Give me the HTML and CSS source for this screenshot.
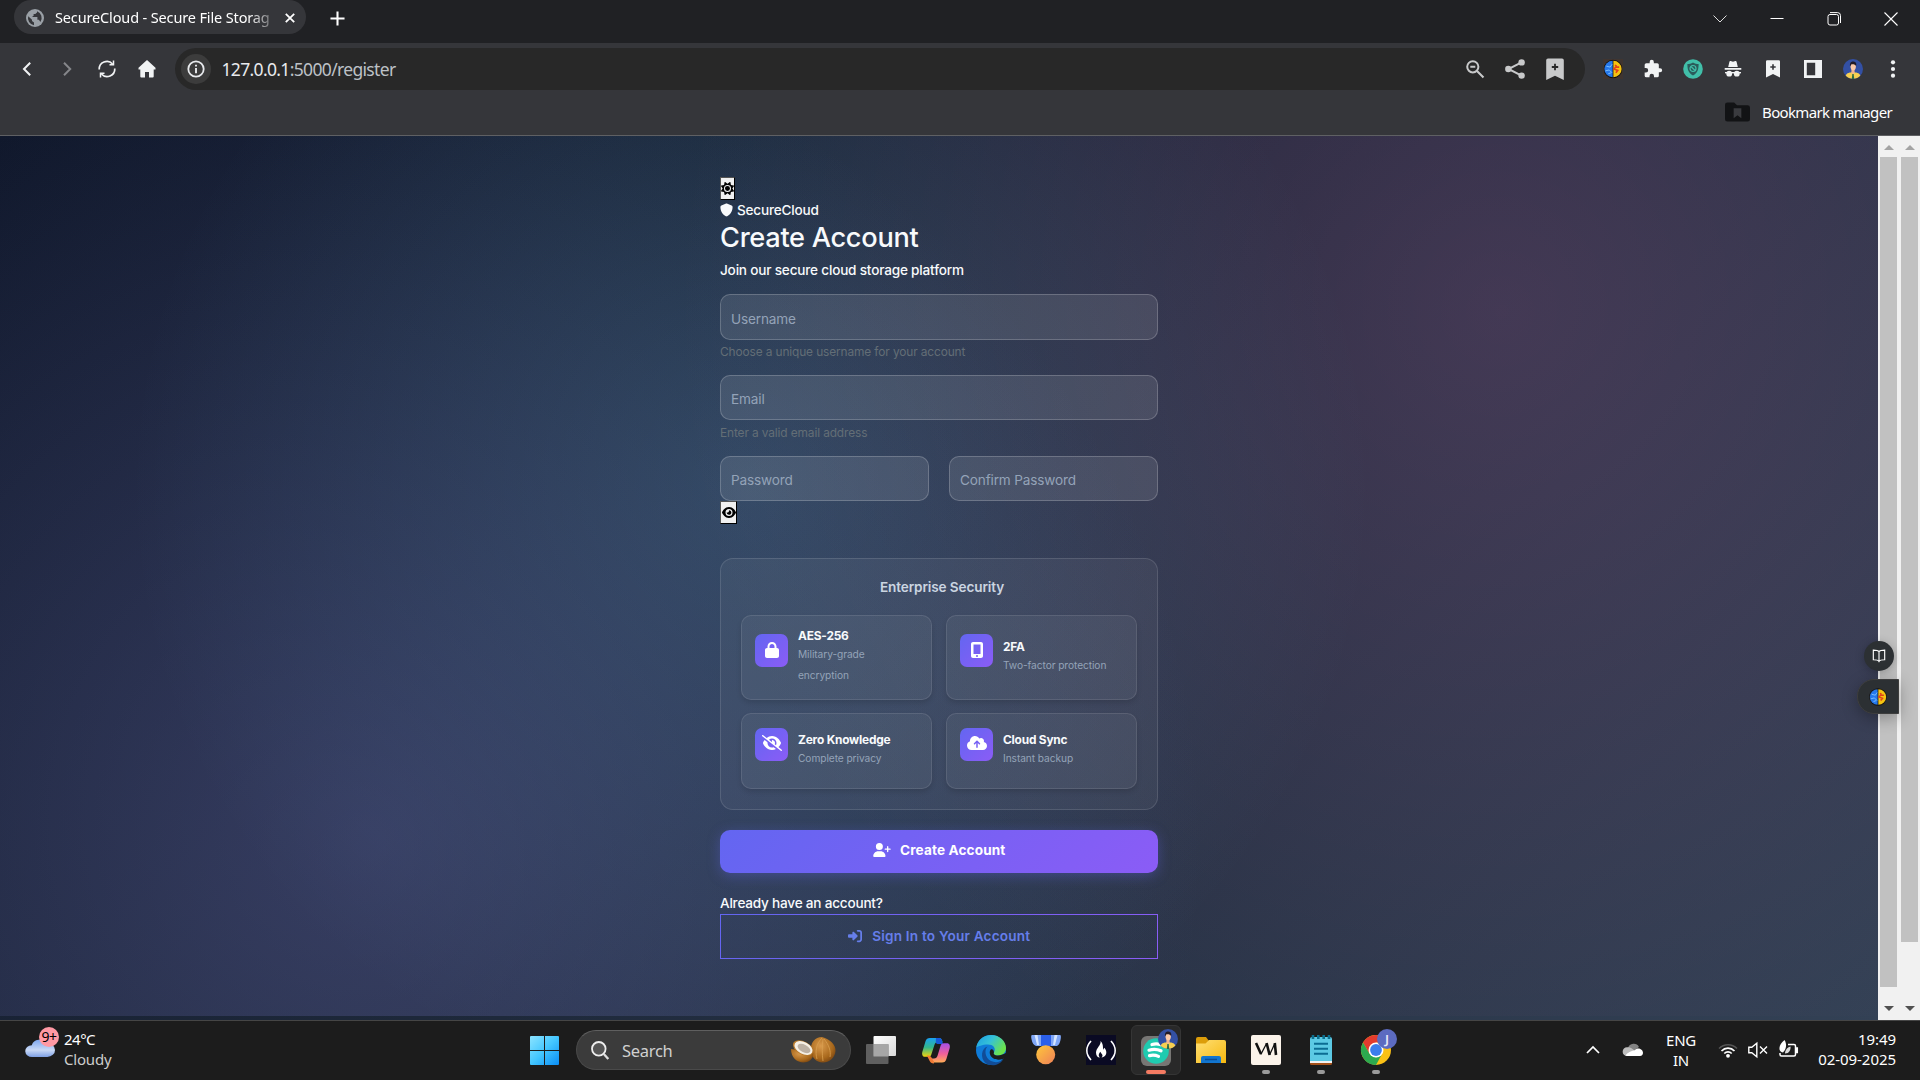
FILE: index.html
```html
<!DOCTYPE html>
<html lang="en">
<head>
<meta charset="utf-8">
<title>SecureCloud - Secure File Storage</title>
<link rel="stylesheet" href="styles.css">
</head>
<body>
<svg class="defs" width="0" height="0" aria-hidden="true">
  <defs>
    <linearGradient id="gWin" x1="0" y1="0" x2="1" y2="1"><stop offset="0" stop-color="#8ce4ff"/><stop offset=".5" stop-color="#43c6ff"/><stop offset="1" stop-color="#0a8df5"/></linearGradient>
    <linearGradient id="gCloud" x1="0" y1="0" x2="0" y2="1"><stop offset="0" stop-color="#7da6ee"/><stop offset=".6" stop-color="#c9d9f6"/><stop offset="1" stop-color="#7ea0e4"/></linearGradient>
    <linearGradient id="gEdgeA" x1="0" y1="0" x2="1" y2=".5"><stop offset="0" stop-color="#1b9de2"/><stop offset=".5" stop-color="#35c1d8"/><stop offset="1" stop-color="#6be34c"/></linearGradient>
    <linearGradient id="gFolder" x1="0" y1="0" x2="1" y2="1"><stop offset="0" stop-color="#ffdf74"/><stop offset="1" stop-color="#f6b80f"/></linearGradient>
    <linearGradient id="gCopA" x1="0" y1="0" x2="0" y2="1"><stop offset="0" stop-color="#1aa0f2"/><stop offset=".5" stop-color="#33b78c"/><stop offset="1" stop-color="#f3d40b"/></linearGradient>
    <linearGradient id="gCopB" x1="0" y1="0" x2="0" y2="1"><stop offset="0" stop-color="#a44fe8"/><stop offset=".55" stop-color="#f0609a"/><stop offset="1" stop-color="#ffad55"/></linearGradient>
    <radialGradient id="gCoco" cx=".4" cy=".35" r=".7"><stop offset="0" stop-color="#d99a4c"/><stop offset=".7" stop-color="#a8681c"/><stop offset="1" stop-color="#7c4712"/></radialGradient>
    <linearGradient id="gTask" x1="0" y1="0" x2="1" y2="1"><stop offset="0" stop-color="#fff"/><stop offset="1" stop-color="#d9d9d9"/></linearGradient>
    <linearGradient id="gMedal" x1="0" y1="0" x2="1" y2="1"><stop offset="0" stop-color="#ffc83a"/><stop offset="1" stop-color="#ee8058"/></linearGradient>
    <symbol id="brain" viewBox="0 0 20 20">
      <circle cx="10" cy="10" r="9.8" fill="#14110f"/>
      <path d="M9.6 1.300A8.700 8.700 0 0 0 9.600 18.700Z" fill="#2678ea"/>
      <path d="M10.400 1.300a8.700 8.700 0 0 1 0 17.400Z" fill="#f5c311"/>
      <path d="M3 7l4 1 2-3M2 12l4-1 3 3M5 15l3-1" stroke="#7cc0ff" fill="none"/>
      <path d="M16.500 8l-3.500 0-2 2 4 1.500-2 2.500M12 6l2 1" stroke="#e0401c" stroke-width="1.700" fill="none"/>
    </symbol>
    <symbol id="avatar" viewBox="0 0 20 20">
      <circle cx="10" cy="10" r="10" fill="#3350a4"/>
      <path d="M2.600 16.600C3.600 13.900 7 13.300 10 13.300s6.400.6 7.400 3.300A10 10 0 0 1 2.600 16.600Z" fill="#f6cf50"/>
      <path d="M8.400 10h3.200v3.400L10 15.600l-1.600-2.200Z" fill="#f0b391"/>
      <ellipse cx="10.200" cy="7.600" rx="2.700" ry="3.600" fill="#fbc9a8"/>
      <path d="M7.100 7.600C6.300 3.500 8.500 2.300 10.500 2.400c2.600.1 3.300 2.200 2.600 4.800C12.500 5.600 10 5 8.200 5.500Z" fill="#231b26"/>
      <path d="M9.300 15h1.400l.5 5H8.800Z" fill="#2d6b46"/>
    </symbol>
  </defs>
</svg>
<div class="screen">
  <header class="tabstrip">
    <div class="tab">
      <svg class="tab-globe" viewBox="0 0 18 18"><circle cx="9" cy="9" r="9" fill="#9aa0a6"/><path d="M2.200 7.200 6 10.700v1.300l2 1.600v2.700A7.300 7.300 0 0 1 2.200 7.200ZM11 2.200v1.300L9.300 5H7.600v1.700L6 8h5.400v2.800h1.500l1.500 2.200A7.200 7.200 0 0 0 11 2.200Z" fill="#35363a"/></svg>
      <span class="tab-title">SecureCloud - Secure File Storag</span>
      <svg class="tab-close" viewBox="0 0 10 10"><path d="M.8.8l8.400 8.400M9.200.8.8 9.200" stroke="#fff" stroke-width="1.800"/></svg>
    </div>
    <svg class="newtab" viewBox="0 0 16 16"><path d="M8 .5v15M.5 8h15" stroke="#fff" stroke-width="2.200"/></svg>
    <div class="winctl">
      <svg viewBox="0 0 14 14"><path d="M.5 3.500 7 10l6.500-6.500" stroke="#ddd" fill="none"/></svg>
      <svg viewBox="0 0 14 14"><path d="M.5 6.500h13" stroke="#fff"/></svg>
      <svg viewBox="0 0 14 14"><rect x="1" y="2.500" width="10.500" height="10.500" rx="2" fill="none" stroke="#fff"/><path d="M3 .6h7.500a3 3 0 0 1 3 3V11" fill="none" stroke="#fff"/></svg>
      <svg viewBox="0 0 14 14"><path d="M.5.5l13 13M13.500.5.5 13.500" stroke="#fff" stroke-width="1.100"/></svg>
    </div>
  </header>
  <section class="toolbar">
    <div class="navrow">
      <div class="navbtns">
        <svg viewBox="0 0 18 18"><path d="M12.200 2.800 6 9l6.200 6.200" stroke="#f1f3f4" stroke-width="2" fill="none"/></svg>
        <svg viewBox="0 0 18 18"><path d="M6 2.800 12.200 9 6 15.200" stroke="#85868a" stroke-width="2" fill="none"/></svg>
        <svg viewBox="0 0 18 18"><path d="M1.200 9.500A7.700 7.700 0 0 1 14.600 4M16.800 8.500A7.700 7.700 0 0 1 3.400 14" stroke="#f1f3f4" stroke-width="1.700" fill="none"/><path d="M15.500.6v4.200h-4M2.500 17.400v-4.200h4" stroke="#f1f3f4" stroke-width="1.500" fill="none"/></svg>
        <svg viewBox="0 0 18 18"><path d="M9 0 .5 7.800V9.500H2.300V16.500a1 1 0 0 0 1 1H7V12h4v5.500h3.700a1 1 0 0 0 1-1V9.500H17.500V7.800Z" fill="#f1f3f4"/></svg>
      </div>
      <div class="omnibox">
        <span class="siteinfo"><svg viewBox="0 0 18 18"><circle cx="9" cy="9" r="7.700" fill="none" stroke="#e8eaed" stroke-width="1.800"/><path d="M9 8v5.200M9 4.700v1.900" stroke="#e8eaed" stroke-width="1.900"/></svg></span>
        <span class="url">127.0.0.1<span class="dim">:5000/register</span></span>
        <div class="omni-icons">
          <svg viewBox="0 0 18 18"><circle cx="6.800" cy="6.800" r="5.600" fill="none" stroke="#c8c9ca" stroke-width="2"/><path d="M4.300 6.800h5M11 11l6.500 6.500" stroke="#c8c9ca" stroke-width="2.100"/></svg>
          <svg viewBox="0 0 20 20"><path d="M16.500 3.300 3.500 10l13 6.700" fill="none" stroke="#c8c9ca" stroke-width="2"/><circle cx="16.600" cy="3.400" r="3.200" fill="#c8c9ca"/><circle cx="3.300" cy="10" r="3.200" fill="#c8c9ca"/><circle cx="16.600" cy="16.600" r="3.200" fill="#c8c9ca"/></svg>
          <svg viewBox="0 0 18 22"><path d="M2 .5h14a1.800 1.800 0 0 1 1.800 1.800V22L9 17.800.2 22V2.300A1.800 1.800 0 0 1 2 .5Z" fill="#c8c9ca"/><path d="M9 5.800v6.400M5.800 9h6.400" stroke="#282828" stroke-width="1.800"/></svg>
        </div>
      </div>
      <div class="extensions">
        <svg viewBox="0 0 20 20"><rect width="20" height="20" fill="#403530"/><use href="#brain" x=".5" y=".5" width="19" height="19"/></svg>
        <svg viewBox="0 0 24 24"><path d="M20.500 11H19V7a2 2 0 0 0-2-2h-4V3.500a2.500 2.500 0 0 0-5 0V5H4a2 2 0 0 0-2 2v3.800h1.500a2.700 2.700 0 0 1 0 5.400H2V20a2 2 0 0 0 2 2h3.800v-1.500a2.700 2.700 0 0 1 5.400 0V22H17a2 2 0 0 0 2-2v-4h1.500a2.500 2.500 0 0 0 0-5Z" fill="#f1f3f4"/></svg>
        <svg viewBox="0 0 20 20"><circle cx="10" cy="10" r="9.800" fill="#41bfa9"/><path d="M10 3.500c2 1.300 3.600 1.500 5.600 1.600 0 5-.8 9-5.600 11.400C5.200 14.100 4.400 10.100 4.400 5.100 6.400 5 8 4.800 10 3.500Z" fill="#2a5c5b"/><circle cx="10" cy="9.500" r="3" fill="none" stroke="#41bfa9" stroke-width="1.200"/><path d="M8 7.500l4 4" stroke="#41bfa9" stroke-width="1.200"/></svg>
        <svg viewBox="0 0 18 18"><path d="M4.200 7 5.300 2.200C5.500 1.200 6.500.9 7.300 1.200L9 1.700l1.700-.5c.8-.3 1.800 0 2 1L13.800 7ZM.7 8h16.600v1.700H.7Z" fill="#f1f3f4"/><circle cx="5.200" cy="13.700" r="2.900" fill="#f1f3f4"/><circle cx="12.800" cy="13.700" r="2.900" fill="#f1f3f4"/><path d="M1 12.700h16" stroke="#f1f3f4" stroke-width="1.400"/></svg>
        <svg viewBox="0 0 18 18"><path d="M3.400.3h11.200A1.300 1.300 0 0 1 16 1.600V17.500L9 14 2 17.500V1.600A1.300 1.300 0 0 1 3.400.3Z" fill="#f1f3f4"/><path d="M9 4.300v5.400M6.300 7h5.400" stroke="#35363a" stroke-width="1.600"/></svg>
        <svg viewBox="0 0 18 18"><path d="M0 0h18v18H0ZM2.800 2.800v12.400h8.400V2.800Z" fill="#f1f3f4" fill-rule="evenodd"/></svg>
        <svg viewBox="0 0 20 20"><use href="#avatar" width="20" height="20"/></svg>
        <svg viewBox="0 0 20 20"><g fill="#f1f3f4"><circle cx="10" cy="3.300" r="2.100"/><circle cx="10" cy="10" r="2.100"/><circle cx="10" cy="16.700" r="2.100"/></g></svg>
      </div>
    </div>
    <div class="bookmarks">
      <svg viewBox="0 0 26 20"><path d="M2.500 0h7l3 3h11A2.500 2.500 0 0 1 26 5.500v12a2.500 2.500 0 0 1-2.500 2.500h-21A2.500 2.500 0 0 1 0 17.500v-15A2.500 2.500 0 0 1 2.500 0Z" fill="#121315"/><path d="M9 6h8v10.500l-4-3-4 3Z" fill="#3a3b3f"/></svg>
      <span>Bookmark manager</span>
    </div>
  </section>
  <div class="viewport">
    <main class="page">
      <div class="glow"></div>
      <div class="register">
        <button class="raw theme"><svg viewBox="0 0 512 512"><path fill-rule="evenodd" d="M361.500 1.200c5 2.100 8.600 6.600 9.600 11.900L391 121l107.900 19.800c5.300 1 9.800 4.600 11.900 9.600s1.500 10.700-1.600 15.200L446.900 256l62.300 90.300c3.100 4.500 3.700 10.200 1.600 15.200s-6.600 8.600-11.900 9.600L391 391 371.100 498.900c-1 5.300-4.600 9.800-9.600 11.900s-10.700 1.500-15.200-1.600L256 446.900l-90.300 62.300c-4.500 3.100-10.200 3.700-15.200 1.600s-8.600-6.600-9.600-11.900L121 391 13.100 371.100c-5.300-1-9.800-4.600-11.900-9.600s-1.500-10.700 1.600-15.200L65.100 256 2.800 165.700c-3.100-4.500-3.700-10.200-1.600-15.200s6.600-8.600 11.900-9.600L121 121 140.900 13.100c1-5.300 4.600-9.800 9.600-11.900s10.700-1.500 15.200 1.600L256 65.100 346.300 2.800c4.500-3.100 10.200-3.700 15.200-1.600zM256 118a138 138 0 1 0 0 276 138 138 0 1 0 0-276zm0 40a98 98 0 1 1 0 196 98 98 0 1 1 0-196z"/></svg></button>
        <div class="brand"><svg viewBox="0 0 512 512"><path fill="#f8fafc" d="M256 0c4.600 0 9.200 1 13.400 2.900L457.700 82.800c22 9.300 38.400 31 38.300 57.200c-.5 99.200-41.300 280.700-213.600 363.200c-16.700 8-36.100 8-52.800 0C57.300 420.700 16.500 239.200 16 140c-.1-26.200 16.300-47.900 38.300-57.200L242.700 2.900C246.800 1 251.400 0 256 0z"/></svg><span>SecureCloud</span></div>
        <h1>Create Account</h1>
        <p class="lead">Join our secure cloud storage platform</p>
        <div class="field first"><label>Username</label></div>
        <div class="hint">Choose a unique username for your account</div>
        <div class="field"><label>Email</label></div>
        <div class="hint">Enter a valid email address</div>
        <div class="pair"><div class="field"><label>Password</label></div><div class="field"><label>Confirm Password</label></div></div>
        <button class="raw reveal"><svg viewBox="0 0 576 512"><path d="M288 32c-80.800 0-145.500 36.800-192.600 80.600C48.600 156 17.300 208 2.500 243.700c-3.300 7.900-3.300 16.700 0 24.600C17.300 304 48.600 356 95.400 399.400C142.500 443.200 207.200 480 288 480s145.500-36.800 192.600-80.600c46.800-43.500 78.100-95.400 93-131.100c3.300-7.900 3.300-16.700 0-24.600c-14.900-35.700-46.200-87.700-93-131.100C433.500 68.800 368.800 32 288 32zM144 256a144 144 0 1 1 288 0 144 144 0 1 1 -288 0zm144-64c0 35.300-28.700 64-64 64c-7.100 0-13.900-1.200-20.300-3.300c-5.500-1.800-11.900 1.600-11.700 7.400c.3 6.900 1.300 13.800 3.200 20.700c13.700 51.200 66.400 81.600 117.600 67.900s81.600-66.400 67.900-117.600c-11.100-41.500-47.800-69.400-88.600-71.100c-5.800-.2-9.200 6.100-7.400 11.700c2.100 6.400 3.300 13.200 3.300 20.300z"/></svg></button>
        <section class="security">
          <h2>Enterprise Security</h2>
          <div class="features">
            <div class="feature"><span class="ficon"><svg width="14" height="16" viewBox="0 0 448 512"><path d="M144 144v48H304V144c0-44.200-35.800-80-80-80s-80 35.800-80 80zM80 192V144C80 64.500 144.500 0 224 0s144 64.500 144 144v48h16c35.300 0 64 28.700 64 64V448c0 35.300-28.700 64-64 64H64c-35.300 0-64-28.700-64-64V256c0-35.300 28.700-64 64-64H80z"/></svg></span><div><b>AES-256</b><small>Military-grade encryption</small></div></div>
            <div class="feature"><span class="ficon"><svg width="12" height="16" viewBox="0 0 384 512"><path fill-rule="evenodd" d="M0 64C0 28.700 28.700 0 64 0H320c35.300 0 64 28.700 64 64V448c0 35.300-28.700 64-64 64H64c-35.300 0-64-28.700-64-64V64zM160 448a32 32 0 1 0 64 0 32 32 0 1 0 -64 0zM304 76H80V384H304V76z"/></svg></span><div><b>2FA</b><small>Two-factor protection</small></div></div>
            <div class="feature"><span class="ficon"><svg width="20" height="16" viewBox="0 0 640 512"><path d="M38.800 5.100C28.400-3.100 13.300-1.200 5.100 9.200S-1.200 34.700 9.200 42.900l592 464c10.400 8.200 25.500 6.300 33.700-4.100s6.300-25.500-4.100-33.700L525.600 386.700c39.600-40.600 66.400-86.100 79.900-118.400c3.300-7.900 3.300-16.700 0-24.600c-14.900-35.700-46.200-87.700-93-131.100C465.500 68.800 400.800 32 320 32c-68.200 0-125 26.300-169.300 60.800L38.800 5.100zM223.100 149.500C248.600 126.200 282.700 112 320 112c79.500 0 144 64.500 144 144c0 24.900-6.300 48.300-17.400 68.700L408 294.500c8.400-19.300 10.600-41.400 4.800-63.300c-11.100-41.500-47.800-69.400-88.600-71.100c-5.800-.2-9.200 6.100-7.400 11.700c2.100 6.400 3.300 13.200 3.300 20.300c0 10.200-2.400 19.800-6.600 28.300l-90.300-70.800zM373 389.900c-16.400 6.500-34.300 10.100-53 10.100c-79.500 0-144-64.500-144-144c0-6.900 .5-13.600 1.400-20.200L83.100 161.500C60.300 191.200 44 220.800 34.500 243.700c-3.300 7.900-3.300 16.700 0 24.600c14.900 35.700 46.200 87.700 93 131.100C174.500 443.200 239.200 480 320 480c47.800 0 89.900-12.900 126.200-32.500L373 389.900z"/></svg></span><div><b>Zero Knowledge</b><small>Complete privacy</small></div></div>
            <div class="feature"><span class="ficon"><svg width="20" height="16" viewBox="0 0 640 512"><path d="M144 480C64.500 480 0 415.500 0 336c0-62.800 40.200-116.200 96.200-135.900c-.1-2.700-.2-5.400-.2-8.100c0-88.400 71.600-160 160-160c59.300 0 111 32.200 138.700 80.200C409.900 102 428.300 96 448 96c53 0 96 43 96 96c0 12.200-2.300 23.800-6.400 34.600C596 238.400 640 290.100 640 352c0 70.700-57.300 128-128 128H144zm79-217c-9.400 9.400-9.400 24.600 0 33.900s24.600 9.400 33.900 0l39-39V392c0 13.300 10.700 24 24 24s24-10.700 24-24V257.900l39 39c9.400 9.400 24.600 9.400 33.900 0s9.400-24.600 0-33.900l-80-80c-9.400-9.400-24.600-9.400-33.900 0l-80 80z"/></svg></span><div><b>Cloud Sync</b><small>Instant backup</small></div></div>
          </div>
        </section>
        <button class="primary"><svg viewBox="0 0 640 512"><path d="M96 128a128 128 0 1 1 256 0A128 128 0 1 1 96 128zM0 482.300C0 383.800 79.800 304 178.300 304h91.400C368.200 304 448 383.800 448 482.300c0 16.400-13.300 29.700-29.700 29.700H29.700C13.300 512 0 498.700 0 482.300zM504 312V248H440c-13.300 0-24-10.700-24-24s10.700-24 24-24h64V136c0-13.300 10.700-24 24-24s24 10.700 24 24v64h64c13.300 0 24 10.700 24 24s-10.700 24-24 24H552v64c0 13.300-10.700 24-24 24s-24-10.700-24-24z"/></svg><span>Create Account</span></button>
        <p class="already">Already have an account?</p>
        <a class="signin"><svg viewBox="0 0 512 512"><path d="M217.900 105.900L340.700 228.700c7.200 7.200 11.300 17.100 11.300 27.300s-4.100 20.100-11.300 27.300L217.900 406.100c-6.400 6.400-15 9.900-24 9.900c-18.700 0-33.900-15.200-33.900-33.900l0-62.100L32 320c-17.700 0-32-14.300-32-32l0-64c0-17.700 14.300-32 32-32l128 0 0-62.100c0-18.700 15.200-33.900 33.900-33.900c9 0 17.600 3.600 24 9.900zM352 416l64 0c17.700 0 32-14.300 32-32l0-256c0-17.700-14.300-32-32-32l-64 0c-17.700 0-32-14.300-32-32s14.300-32 32-32l64 0c53 0 96 43 96 96l0 256c0 53-43 96-96 96l-64 0c-17.700 0-32-14.300-32-32s14.300-32 32-32z"/></svg><span>Sign In to Your Account</span></a>
      </div>
    </main>
    <div class="scroll inner"><i class="up"></i><b></b><i class="down"></i></div>
    <div class="scroll outer"><i class="up"></i><b></b><i class="down"></i></div>
    <div class="float-read"><svg viewBox="0 0 16 16"><path d="M8 3C7 1.600 5.500 1.300 1.500 1.300v11C5 12.300 7 12.500 8 14.300c1-1.800 3-2 6.500-2v-11C10.500 1.300 9 1.600 8 3ZM8 3v11" fill="none" stroke="#fff" stroke-width="1.300"/></svg></div>
    <div class="float-brain"><svg viewBox="0 0 20 20"><use href="#brain" width="20" height="20"/></svg></div>
  </div>
  <footer class="taskbar">
    <div class="weather">
      <div class="wicon"><svg viewBox="0 0 33 24" preserveAspectRatio="none"><path d="M8 24a7.500 7.500 0 0 1-.5-15A9 9 0 0 1 24 6.500 8.500 8.500 0 0 1 24.500 24Z" fill="url(#gCloud)"/></svg><span>9+</span></div>
      <div class="wtext"><span>24°C</span><span class="dim">Cloudy</span></div>
    </div>
    <div class="apps">
      <svg class="start" viewBox="0 0 29 29"><path d="M0 1a1 1 0 0 1 1-1H14V14H0ZM15 0H28a1 1 0 0 1 1 1V14H15ZM0 15H14V29H1a1 1 0 0 1-1-1ZM15 15H29V28a1 1 0 0 1-1 1H15Z" fill="url(#gWin)"/></svg>
      <div class="search">
        <svg class="mag" viewBox="0 0 18 19"><circle cx="7.800" cy="7.800" r="6.800" fill="#555" stroke="#eee" stroke-width="1.800"/><path d="M12.800 13l4.500 5" stroke="#ddd" stroke-width="2.300"/></svg>
        <span>Search</span>
        <svg class="coco" viewBox="0 0 46 26"><path d="M21 14C20 6 25 0 32 0c8 2 14 8 13.500 14C45 21 39 25.500 33 25.500 26 25.500 21.500 20 21 14Z" fill="url(#gCoco)"/><path d="M32 1c-6 6-7 14-5 21M33 2c-1 8-1 15 0 22M34 2c5 6 7 12 6 18" fill="none" stroke="#d9a050" stroke-width=".8"/><path d="M1 12C1 22 9 27 17 25c5-2 7-6 6-10Z" fill="url(#gCoco)"/><ellipse cx="13" cy="11" rx="11" ry="6.500" transform="rotate(28 13 11)" fill="#b77a2c"/><ellipse cx="13.500" cy="11" rx="9.800" ry="5.900" transform="rotate(28 13.500 11)" fill="#f5efe4"/><ellipse cx="14" cy="11.500" rx="7" ry="3.800" transform="rotate(28 14 11.500)" fill="#bdb1a3"/></svg>
      </div>
      <div class="app"><svg viewBox="0 0 30 30"><rect x="7.500" y="1" width="22.500" height="20" rx="1" fill="url(#gTask)"/><rect x="0" y="9" width="22.500" height="20" rx="1" fill="#6b6b6b" fill-opacity=".85"/><path d="M7.500 9h15v12.500h-15Z" fill="#a6a6a6"/></svg></div>
      <div class="app"><svg viewBox="0 0 30 30"><path d="M9 3h9c2.500 0 3 2 3.500 4H17c-2 0-3 1-3.600 3L10.500 19c-.5 2-1.500 2.800-3.500 2.800H4C1.500 21.800.7 19.500 1.300 17L4.600 6C5.300 4 6.500 3 9 3Z" fill="url(#gCopA)"/><path d="M15 3h3.500c2 0 2.700 2 3.500 6h-5c-2 0-2.500-1-2-6Z" fill="#1658d8"/><path d="M21 27.500h-9c-2.500 0-3-2-3.500-4H13c2 0 3-1 3.600-3L19.500 11c.5-2 1.500-2.800 3.500-2.800h3c2.500 0 3.300 2.300 2.700 4.800L25.400 24c-.7 2.500-1.900 3.500-4.400 3.500Z" fill="url(#gCopB)"/><path d="M7.500 21.600c3 0 3.300 5.900 5.500 5.900-2.600 0-3.600-1.500-4.200-3.500Z" fill="#f28a2a" stroke="#f07a35" stroke-width="2"/></svg></div>
      <div class="app"><svg viewBox="0 0 30 30"><circle cx="15" cy="15" r="15" fill="#0f7bd8"/><path d="M.3 12.500C1.500 5 7.500 0 15 0c9 0 15 6.500 15 13 0 5-4 7.500-8 7.500-3.500 0-5-1.500-4-3 2.500-4.500-1-8-6-8-6 0-10 2-11.700 3Z" fill="url(#gEdgeA)"/><path d="M11.500 11.500C8 15 9 23 15 26c4.500 2.200 9.500 1 12.500-2-5 8-14 7.500-18.500 3.500C4.500 23 5 13.500 11.500 11.500Z" fill="#114c97"/><path d="M18 17.500c-1 1.500.5 3 4 3 2.500 0 4.800-.9 8-2.500v4c-3 3-9 3.500-12.500 1.500-4-2.300-4-6.500-3.500-7.500.5-3 4-2 4 1.500Z" fill="#1c1c1c"/></svg></div>
      <div class="app"><svg viewBox="0 0 30 30"><path d="M1 0h28c1 0 1.200 2 .5 5-.6 3-1.500 5-3.500 6H5C2.500 10 1.300 8 .7 5 0 2 0 0 1 0Z" fill="#7fa6f6"/><path d="M10 0h10v11H10Z" fill="#2b5fe9"/><path d="M3.500 0h3L8 10H6ZM23.500 0h3L24 10h-2Z" fill="#d5e5ff"/><circle cx="14.700" cy="19.800" r="9.500" fill="url(#gMedal)"/></svg></div>
      <div class="app"><svg viewBox="0 0 30 30"><rect width="30" height="30" fill="#0a0a23"/><path d="M5 6C-.5 12-.5 19 5 25M25 6c5.500 6 5.500 13 0 19" fill="none" stroke="#fff" stroke-width="1.700"/><path d="M14.500 6c1 4-4.500 7-4.500 11.500 0 3 1.500 5 4 5-2.200-2-1-4.500.5-5.800.2 2 2.300 2.300 2 4-.1.800-.5 1.400-1 1.800 3.500-.5 5-3 4.800-5.500-.2-2-1.300-3-1.500-4.200-.8.500-1 1-1 2C16.200 13 18 9 14.500 6Z" fill="#fff"/></svg></div>
      <div class="app active"><svg viewBox="0 0 30 30"><rect width="30" height="30" rx="6" fill="#777674"/><circle cx="15" cy="15" r="12.800" fill="#1fcbb0"/><g fill="none" stroke="#fff" stroke-width="3.200" stroke-linecap="round"><path d="M11 8.500c3-.8 6-.8 9 .3M8 14.200c4-1.300 8-1.200 12 .6M8.500 19.600c3-.8 6-.6 9 .8"/></g></svg><svg class="badge" viewBox="0 0 20 20"><use href="#avatar" width="20" height="20"/></svg><i></i></div>
      <div class="app"><svg viewBox="0 0 30 30"><path d="M0 4a2 2 0 0 1 2-2h8l3 4v4H0Z" fill="#dc9d0a"/><path d="M0 8.500h9.500L13 5h15a2 2 0 0 1 2 2V28H0Z" fill="url(#gFolder)"/><path d="M5 28v-5a2 2 0 0 1 2-2h16a2 2 0 0 1 2 2v5Z" fill="#1275cf"/><path d="M9 24.500h12" stroke="#0a4d97" stroke-width="1.500"/></svg></div>
      <div class="app"><svg viewBox="0 0 30 30"><rect width="30" height="30" rx="2" fill="#fbf3ea"/><path d="M5 8l5 11M15.600 8l3 12M23.800 8l1.200 12" fill="none" stroke="#111" stroke-width="2.600"/><path d="M9.800 19.500 15.300 9M18.500 20 23.600 9" fill="none" stroke="#111" stroke-width="1.300"/></svg><i></i></div>
      <div class="app"><svg viewBox="0 0 30 30"><path d="M4 24h22v4.500a1.500 1.500 0 0 1-1.500 1.500h-19A1.500 1.500 0 0 1 4 28.500Z" fill="#a4511a"/><path d="M4 24h22v4H4Z" fill="#f2f2f2"/><path d="M4 4a2 2 0 0 1 2-2h18a2 2 0 0 1 2 2v22H4Z" fill="#5cc9e4"/><path d="M8 8.800h14M8 13.800h14M8 18.800h14" stroke="#0b6c93" stroke-width="1.900"/><path d="M7 0v4M12.300 0v4M17.700 0v4M23 0v4" stroke="#0c6f8e" stroke-width="2.600"/></svg><i></i></div>
      <div class="app"><svg viewBox="0 0 30 30"><circle cx="15" cy="15" r="15" fill="#fbc116"/><path d="M2 7.500A15 15 0 0 1 28 7.500H15L8.500 18.700Z" fill="#e33b2e"/><path d="M2 7.500 8.500 18.750 15 22.500 21 19 15 30A15 15 0 0 1 2 7.500Z" fill="#2da94f"/><circle cx="15" cy="15" r="7.500" fill="#fff"/><circle cx="15" cy="15" r="5.900" fill="#3b7ded"/></svg><span class="badge letter">J</span><i></i></div>
    </div>
    <div class="tray">
      <svg class="t-chev" viewBox="0 0 14 8"><path d="M1 7l6-6 6 6" fill="none" stroke="#fff" stroke-width="1.700"/></svg>
      <svg class="t-cloud" viewBox="0 0 20 13"><path d="M5 5a6 6 0 0 1 11-1L9 9Z" fill="#848484"/><path d="M4 13A4 4 0 0 1 4 4.300C7 3.600 9 5.500 12 8l-4 5Z" fill="#bdbdbd"/><path d="M2.500 12.500C5 9 9 8 12 7c2-3 8-1.500 8 2.800A3.200 3.200 0 0 1 17 13H4Z" fill="#fff"/></svg>
      <div class="lang"><span>ENG</span><span>IN</span></div>
      <svg class="t-wifi" viewBox="0 0 20 16"><path d="M1 6.500a12.500 12.500 0 0 1 18 0" fill="none" stroke="#555" stroke-width="1.500"/><path d="M3.500 9a9 9 0 0 1 13 0M6.300 11.500a5.200 5.200 0 0 1 7.400 0" fill="none" stroke="#fff" stroke-width="1.700"/><circle cx="10" cy="13.800" r="1.900" fill="#fff"/></svg>
      <svg class="t-vol" viewBox="0 0 20 16"><path d="M.8 5.300h3L8.800 1.300v13.400l-5-4h-3ZM12 4.500l7 7M19 4.500l-7 7" fill="none" stroke="#fff" stroke-width="1.400"/></svg>
      <svg class="t-bat" viewBox="0 0 20 17"><path d="M10 4.500h6a1.500 1.500 0 0 1 1.500 1.500v8.500A1.500 1.500 0 0 1 16 16H3.500A1.500 1.500 0 0 1 2 14.500V13M18 8v4.500h1.300V8Z" fill="none" stroke="#fff" stroke-width="1.500"/><path d="M6.500 0C9 4 8.500 9 5 12.500 0 12 0 5 6.500 0Z" fill="#fff"/><path d="M12.500 6.500C13 10 11 13.500 7 13.500c0-3 2-6 5.500-7Z" fill="#ddd"/></svg>
      <div class="clock"><span>19:49</span><span>02-09-2025</span></div>
    </div>
  </footer>
</div>
</body>
</html>
```
FILE: styles.css
```css
* { box-sizing: border-box; }
body { margin: 0; background: #1c1c1c; font-family: "Noto Sans", "Open Sans", sans-serif; overflow: hidden; }
svg { display: block; flex: none; overflow: visible; }
.defs { position: absolute; }
.screen { width: 1920px; height: 1080px; display: flex; flex-direction: column; }
button { font: inherit; padding: 0; }
h1, h2, p { margin: 0; }

/* browser chrome */
.tabstrip { height: 43px; flex: none; background: #202124; display: flex; align-items: flex-start; }
.tab { width: 292px; height: 34px; margin-left: 14px; padding: 0 10px 0 12px; border-radius: 17px; background: #35363a; display: flex; align-items: center; }
.tab-globe { width: 18px; height: 18px; margin-top: 2px; }
.tab-title { width: 217px; margin-left: 11px; white-space: nowrap; font-size: 14.5px; letter-spacing: -.14px; color: #fff; mask-image: linear-gradient(90deg, #000 89%, rgba(0,0,0,.25) 100%); }
.tab-close { width: 10px; height: 10px; margin-left: 13px; margin-top: 1px; }
.newtab { width: 15px; height: 15px; margin: 11px 0 0 24px; }
.winctl { display: flex; gap: 43px; margin: 12px 22px 0 auto; }
.winctl svg { width: 14px; height: 14px; }
.toolbar { height: 93px; flex: none; background: #35363a; border-bottom: 1px solid #5f6063; }
.navrow { height: 52px; padding-top: 5px; display: flex; align-items: flex-start; }
.navbtns { display: flex; gap: 22px; margin: 12px 0 0 18px; }
.navbtns svg { width: 18px; height: 18px; }
.omnibox { width: 1410px; height: 42px; margin-left: 19px; border-radius: 21px; background: #282828; display: flex; align-items: center; padding: 0 21px 0 6px; }
.siteinfo { width: 30px; height: 30px; border-radius: 50%; background: #3c3c3c; display: grid; place-items: center; }
.siteinfo svg { width: 18px; height: 18px; }
.url { margin-left: 10.5px; font-size: 17.5px; letter-spacing: -.66px; color: #e8eaed; white-space: nowrap; }
.url .dim { color: #bdc1c6; }
.omni-icons { margin-left: auto; display: flex; gap: 21px; align-items: center; }
.omni-icons svg { width: 18px; height: 18px; }
.omni-icons svg:nth-child(2) { width: 20px; height: 20px; }
.omni-icons svg:nth-child(3) { height: 22px; }
.extensions { display: flex; gap: 20px; margin: 11px 0 0 17.5px; }
.extensions svg { width: 20px; height: 20px; }
.extensions svg:nth-child(4), .extensions svg:nth-child(5), .extensions svg:nth-child(6) { padding: 1px; }
.bookmarks { display: flex; align-items: center; justify-content: flex-end; padding-right: 28px; height: 34px; font-size: 15px; letter-spacing: -.66px; color: #fff; white-space: nowrap; }
.bookmarks svg { width: 25px; height: 20px; margin-right: 12px; }

/* page */
.viewport { height: 884px; flex: none; display: flex; position: relative; }
.page { position: relative; width: 1878px; background: linear-gradient(135deg, #0f172a 0%, #1e293b 50%, #334155 100%); font-family: Inter, sans-serif; color: #f8fafc; }
.glow { position: absolute; inset: 0 0 4px 0; background: radial-gradient(circle at 20% 80%, rgba(120,119,198,.3) 0%, transparent 50%), radial-gradient(circle at 80% 20%, rgba(255,119,198,.15) 0%, transparent 50%), radial-gradient(circle at 40% 40%, rgba(120,219,255,.17) 0%, transparent 50%); }
.register { position: relative; width: 438px; margin: 0 auto; padding-top: 41px; display: flex; flex-direction: column; align-items: stretch; }
.raw { background: #f0f0f0; border: 1px solid #000; border-top-color: #555; border-left-color: #555; display: grid; place-items: center; height: 23px; align-self: flex-start; }
.theme { width: 15px; }
.theme svg { width: 13px; height: 13px; }
.reveal { width: 17px; }
.reveal svg { width: 14px; height: 13px; }
.brand { height: 21px; display: flex; align-items: center; padding-bottom: 2px; font-size: 13.6px; font-weight: 500; letter-spacing: -.2px; }
.brand svg { width: 13px; height: 14px; margin-right: 4px; }
h1 { font-size: 27.2px; font-weight: 500; line-height: 33px; letter-spacing: -.3px; }
.lead { font-size: 13.6px; font-weight: 500; line-height: 22px; margin-top: 5px; letter-spacing: -.2px; }
.field { height: 45px; flex: none; border: 1px solid rgba(255,255,255,.2); border-radius: 10px; background: rgba(255,255,255,.1); padding: 2px 10px 0; display: flex; align-items: center; font-size: 13.6px; letter-spacing: -.15px; color: #94a3b8; }
.field.first { height: 46px; margin-top: 13px; }
.field.first label { margin-top: 2px; }
.hint { height: 35px; padding-top: 3px; font-size: 11.9px; line-height: 18px; letter-spacing: -.12px; color: #636e76; }
.hint + .field + .hint { height: 36px; padding-top: 4px; }
.pair { display: grid; grid-template-columns: 1fr 1fr; gap: 20px; }
.security { height: 252px; margin-top: 34px; padding: 18px 20px 20px; border: 1px solid rgba(255,255,255,.12); border-radius: 13px; background: rgba(255,255,255,.05); }
h2 { font-size: 13.6px; font-weight: 600; line-height: 20px; letter-spacing: -.13px; text-align: center; color: #cbd5e1; padding-left: 6px; }
.features { display: grid; grid-template-columns: 191px 191px; grid-template-rows: 85px 76px; gap: 13px 14px; margin-top: 18px; }
.feature { display: flex; align-items: center; gap: 10px; padding: 0 13px 14px; border: 1px solid rgba(255,255,255,.1); border-radius: 10px; background: rgba(255,255,255,.05); box-shadow: 0 3px 5px rgba(0,0,0,.12); }
.feature > div { padding-top: 13px; }
.ficon { width: 33px; height: 33px; flex: none; border-radius: 7px; background: linear-gradient(135deg, #6366f1, #8b5cf6); display: grid; place-items: center; padding-bottom: 2px; }
.ficon svg { fill: #fff; }
.feature b { display: block; font-size: 11.9px; line-height: 18px; font-weight: 700; letter-spacing: -.2px; white-space: nowrap; }
.feature small { display: block; margin: -1px 0 1px; font-size: 10.2px; line-height: 21px; letter-spacing: -.08px; color: #94a3b8; }
.primary { height: 43px; margin-top: 20px; border: 0; border-radius: 10px; background: linear-gradient(135deg, #6366f1, #8b5cf6); box-shadow: 0 3px 13px rgba(99,102,241,.35); color: #fff; display: flex; align-items: center; justify-content: center; gap: 9.5px; font-size: 13.6px; font-weight: 700; letter-spacing: .12px; padding-bottom: 4px; }
.primary svg { width: 18px; height: 14px; fill: #fff; }
.already { margin-top: 20px; font-size: 13.6px; font-weight: 500; line-height: 21px; letter-spacing: -.22px; }
.signin { height: 45px; display: flex; align-items: center; justify-content: center; gap: 10.5px; padding-bottom: 2px; border: 1px solid; border-image: linear-gradient(135deg, #6366f1, #8b5cf6) 1; color: #667eea; font-size: 13.6px; font-weight: 600; letter-spacing: .2px; }
.signin svg { width: 14px; height: 14px; fill: #667eea; }

.scroll { width: 21px; background: #f1f1f1; display: flex; flex-direction: column; align-items: center; padding: 9px 0; }
.scroll b { width: 17px; background: #c1c1c1; margin-top: 7px; }
.inner b { height: 830px; }
.outer b { height: 785px; }
.scroll i { border: 5px solid transparent; }
.up { border-top: 0 !important; border-bottom-color: #a3a3a3 !important; }
.down { border-bottom: 0 !important; border-top-color: #505050 !important; margin-top: auto; }
.float-read { position: absolute; left: 1864px; top: 505px; width: 30px; height: 30px; border-radius: 50%; background: #2c3033; display: grid; place-items: center; box-shadow: 0 2px 10px rgba(0,0,0,.25); }
.float-read svg { width: 14px; height: 14px; }
.float-brain { position: absolute; left: 1857px; top: 543px; width: 42px; height: 35px; border-radius: 17px 0 0 17px; background: #2c3033; border: 1px solid #3d3d3d; padding: 8px 0 0 11px; box-shadow: 0 4px 16px rgba(0,0,0,.3); }
.float-brain svg { width: 18px; height: 18px; }

/* taskbar */
.taskbar { height: 60px; background: #1c1c1c; border-top: 1px solid #454545; display: grid; grid-template-columns: 530px 1fr auto; color: #fff; font-size: 15px; }
.weather { display: flex; padding-left: 25px; }
.wicon { position: relative; width: 30px; padding-top: 17px; }
.wicon svg { width: 30px; height: 19px; }
.wicon span { position: absolute; left: 14px; top: 6px; width: 20px; height: 20px; border-radius: 50%; background: #ff99a4; color: #000; font-size: 14px; line-height: 20px; text-align: center; letter-spacing: -.6px; }
.wtext { display: flex; flex-direction: column; margin: 8px 0 0 9px; line-height: 20px; letter-spacing: -.5px; }
.wtext .dim { color: #ccc; letter-spacing: -.2px; }
.apps { display: flex; align-items: flex-start; }
.start { width: 29px; height: 29px; margin: 15px 17px 0 0; }
.search { width: 275px; height: 40px; margin: 9px 15px 0 0; border-radius: 20px; background: #3b3b3b; border: 1px solid #4a4a4a; border-top-color: #5f5f5f; display: flex; align-items: center; padding: 0 14px; font-size: 16.5px; letter-spacing: -.3px; color: #d0d0d0; }
.mag { width: 18px; height: 19px; margin-right: 13px; }
.coco { width: 46px; height: 26px; margin-left: auto; }
.app { position: relative; width: 30px; height: 30px; margin: 14px 25px 0 0; }
.app > svg:first-child { width: 30px; height: 30px; }
.app.active { width: 50px; height: 50px; margin: 4px 15px 0 -10px; padding: 10px 9px; border-radius: 6px; background: #292929; border: 1px solid #353535; }
.app i { position: absolute; left: 11px; bottom: -9px; width: 8px; height: 4px; border-radius: 2px; background: #9a9a9a; }
.app.active i { left: 14px; bottom: 0; width: 20px; background: #f47b62; }
.badge { position: absolute; left: 26px; top: 3px; width: 20px; height: 20px; }
.badge.letter { left: 16px; top: -6px; border-radius: 50%; background: #5c6bc0; color: #e6e8f6; font-size: 13px; line-height: 20px; text-align: center; font-weight: 600; }
.tray { display: flex; padding-right: 24px; }
.t-chev { width: 14px; height: 8px; margin-top: 25px; }
.t-cloud { width: 20px; height: 13px; margin: 22px 0 0 23px; }
.lang { width: 32px; margin: 9px 0 0 22px; text-align: center; line-height: 20px; letter-spacing: -.3px; display: flex; flex-direction: column; }
.t-wifi { width: 20px; height: 16px; margin: 21px 0 0 21px; }
.t-vol { width: 20px; height: 16px; margin: 21px 0 0 10px; }
.t-bat { width: 20px; height: 17px; margin: 19px 0 0 10px; }
.clock { width: 84px; margin: 8px 0 0 14px; display: flex; flex-direction: column; text-align: right; line-height: 20px; letter-spacing: -.05px; white-space: nowrap; align-items: flex-end; }
```
